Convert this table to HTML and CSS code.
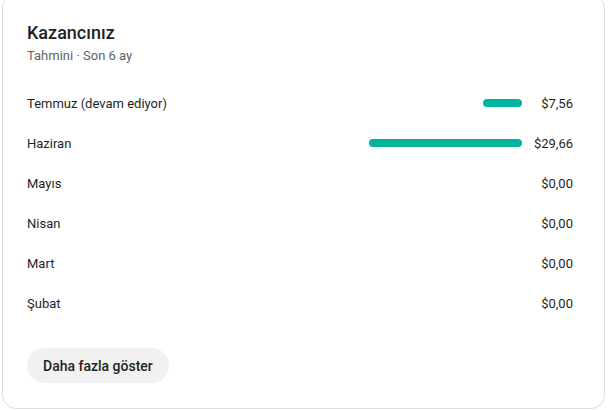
FILE: index.html
```html
<!DOCTYPE html>
<html lang="tr">
<head>
<meta charset="utf-8">
<link rel="stylesheet" href="styles.css">
</head>
<body>
<div class="card">
  <div class="title">Kazancınız</div>
  <div class="sub">Tahmini · Son 6 ay</div>
  <div class="rows">
    <div class="row"><span class="label">Temmuz (devam ediyor)</span><span class="bar" style="width:39px"></span><span class="amt">$7,56</span></div>
    <div class="row"><span class="label">Haziran</span><span class="bar" style="width:153px"></span><span class="amt">$29,66</span></div>
    <div class="row"><span class="label">Mayıs</span><span class="amt">$0,00</span></div>
    <div class="row"><span class="label">Nisan</span><span class="amt">$0,00</span></div>
    <div class="row"><span class="label">Mart</span><span class="amt">$0,00</span></div>
    <div class="row"><span class="label">Şubat</span><span class="amt">$0,00</span></div>
  </div>
  <button class="more">Daha fazla göster</button>
</div>
</body>
</html>
```
FILE: styles.css
```css
* { box-sizing: border-box; }
html, body { margin: 0; background: #fff; }
body {
  font-family: Roboto, "Noto Sans", Arial, sans-serif;
  color: #202124;
  padding: 0 3px 0 2px;
}
.card {
  margin-top: -6px;
  height: 415px;
  border: 1px solid #dadce0;
  border-radius: 14px;
  padding: 26px 31px 0 24px;
  display: flex;
  flex-direction: column;
}
.title {
  font-size: 18px;
  line-height: 24px;
  font-weight: 500;
  color: #1f1f1f;
}
.sub {
  font-size: 13px;
  line-height: 16px;
  margin-top: 3px;
  color: #5f6368;
}
.rows {
  margin-top: 19px;
  display: flex;
  flex-direction: column;
}
.row {
  display: flex;
  align-items: center;
  height: 40px;
  font-size: 13px;
  color: #1f1f1f;
}
.label { flex: 1; }
.bar {
  height: 8px;
  border-radius: 4px;
  background: #00b59e;
}
.amt {
  width: 51px;
  text-align: right;
}
.more {
  align-self: flex-start;
  margin-top: 25px;
  height: 35px;
  padding: 0 16px;
  border: none;
  border-radius: 18px;
  background: #f1f1f1;
  font-family: Roboto, "Noto Sans", Arial, sans-serif;
  font-size: 14px;
  font-weight: 500;
  color: #1f1f1f;
}
```
